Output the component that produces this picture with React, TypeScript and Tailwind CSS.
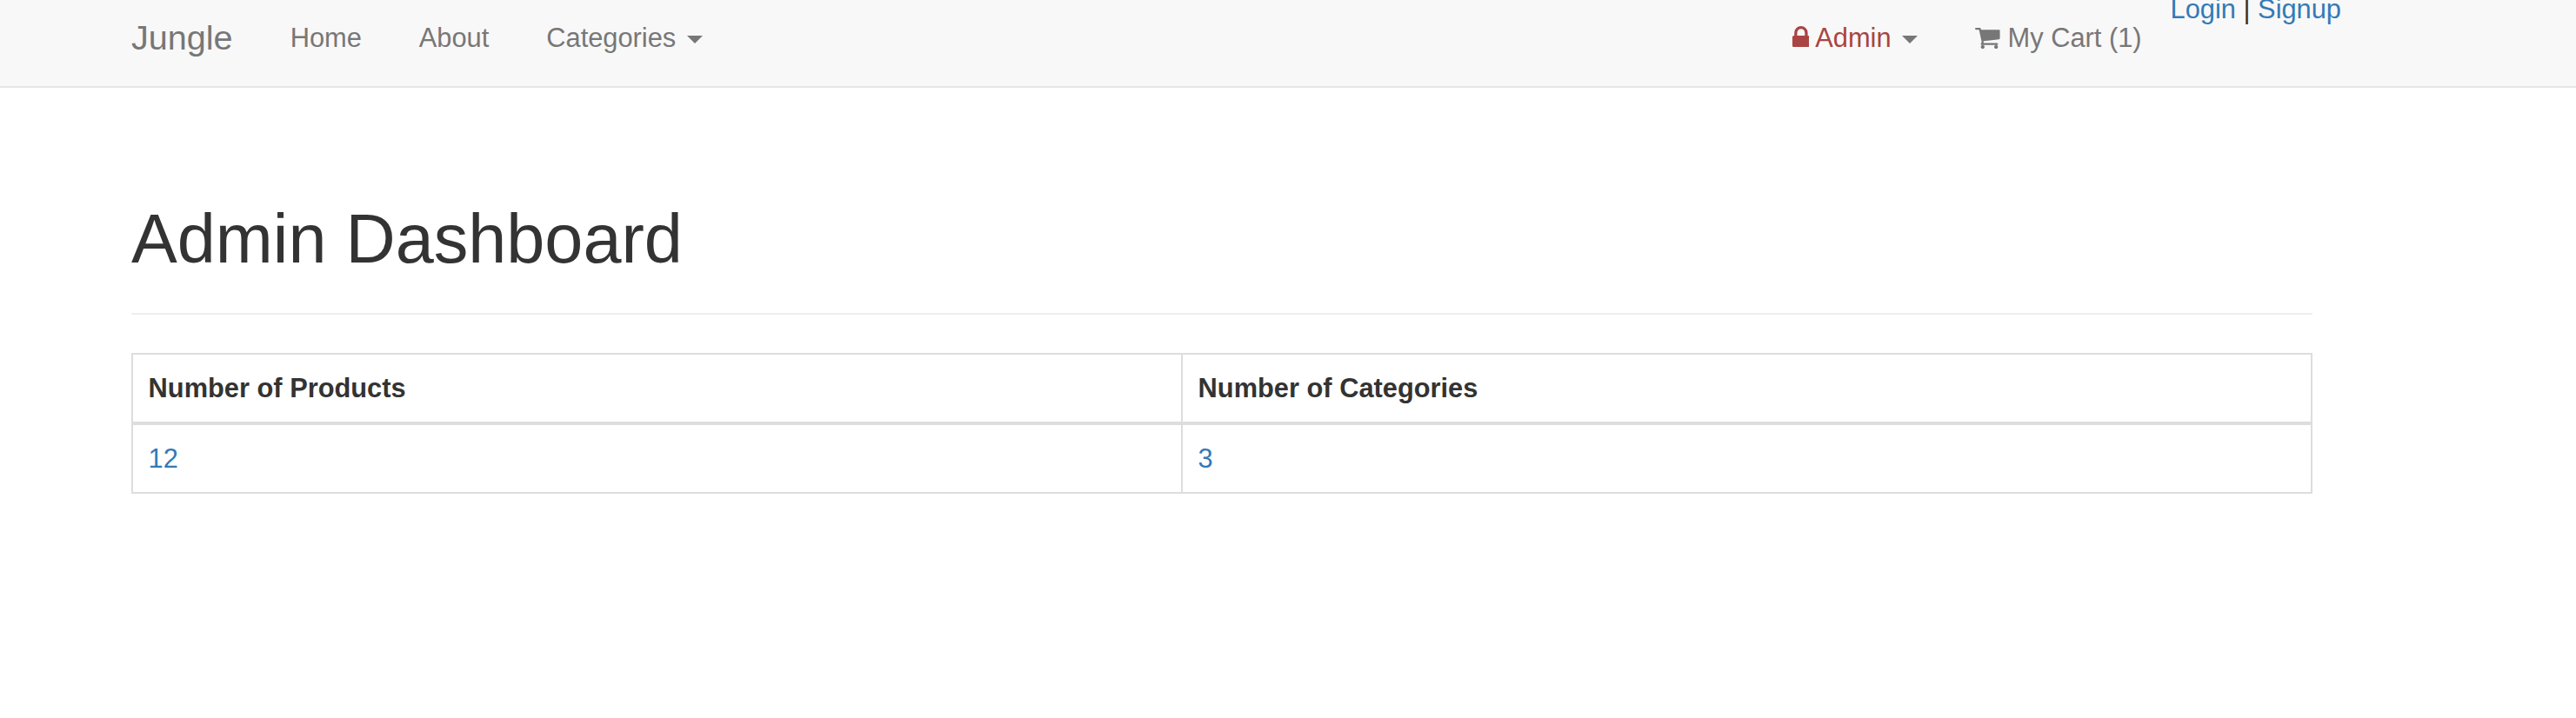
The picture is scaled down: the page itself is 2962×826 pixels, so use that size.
import type { ReactNode } from "react";

function LockIcon() {
  return (
    <svg viewBox="320 128 1152 1408" fill="currentColor" className="inline-block h-[24.2px] w-[19.8px] align-baseline" aria-hidden="true">
      <path d="M640 768h512v-192q0-106-75-181t-181-75-181 75-75 181v192zm832 96v576q0 40-28 68t-68 28h-960q-40 0-68-28t-28-68v-576q0-40 28-68t68-28h32v-192q0-184 132-316t316-132 316 132 132 316v192h32q40 0 68 28t28 68z" />
    </svg>
  );
}

function CartIcon() {
  return (
    <svg viewBox="64 256 1664 1408" fill="currentColor" className="inline-block h-[24.2px] w-[28.6px] align-[-2.2px]" aria-hidden="true">
      <path d="M704 1536q0 52-38 90t-90 38-90-38-38-90 38-90 90-38 90 38 38 90zm896 0q0 52-38 90t-90 38-90-38-38-90 38-90 90-38 90 38 38 90zm128-1088v512q0 24-16.500 42.500t-40.500 21.500l-1044 122q13 60 13 70 0 16-24 64h920q26 0 45 19t19 45-19 45-45 19h-1024q-26 0-45-19t-19-45q0-11 8-31.500t16-36 21.500-40 15.500-29.500l-177-823h-204q-26 0-45-19t-19-45 19-45 45-19h256q16 0 29.500 6.500t21.500 15.500 13.500 24.500 8 26 5.500 29.500 4.500 26h1201q26 0 45 19t19 45z" />
    </svg>
  );
}

function Caret() {
  return (
    <span className="ml-[4.4px] inline-block h-0 w-0 border-x-9 border-t-9 border-x-transparent border-t-[#777] align-middle" />
  );
}

function NavLink({ children, className = "text-[#777]" }: { children: ReactNode; className?: string }) {
  return (
    <a href="#" className={`block px-[33px] py-[33px] whitespace-nowrap ${className}`}>
      {children}
    </a>
  );
}

export default function App() {
  return (
    <div className="h-[826px] w-[2962px] overflow-hidden bg-white font-['Liberation_Sans',sans-serif] text-[30.8px] leading-[44px] text-[#333]">
      <header className="h-[101px] overflow-hidden border-b-2 border-[#e7e7e7] bg-[#f8f8f8]">
        <div className="-mt-[11.2px] ml-[118px] flex w-[2574px] items-start justify-between">
          <nav className="flex">
            <a href="#" className="block px-[33px] pt-[32.6px] text-[39.6px] leading-[44px] text-[#777]">Jungle</a>
            <NavLink>Home</NavLink>
            <NavLink>About</NavLink>
            <NavLink>Categories <Caret /></NavLink>
          </nav>
          <div className="flex">
            <NavLink className="text-[#a94442]"><LockIcon /> Admin <Caret /></NavLink>
            <NavLink><CartIcon /> My Cart (1)</NavLink>
            <div className="whitespace-nowrap">
              <a href="#" className="text-[#337ab7]">Login</a> | <a href="#" className="text-[#337ab7]">Signup</a>
            </div>
          </div>
        </div>
      </header>

      <main className="ml-[151px] w-[2508px] pt-[130px]">
        <div className="h-[131px] border-b-2 border-[#eee]">
          <h1 className="text-[79.2px] leading-[87px] font-normal">Admin Dashboard</h1>
        </div>
        <table className="mt-[44px] w-full table-fixed border-separate border-spacing-0 border-2 border-[#ddd] text-left">
          <thead>
            <tr className="h-[81px]">
              <th className="w-[1207px] border-r-2 border-b-4 border-[#ddd] px-[17.6px] py-0 font-bold">Number of Products</th>
              <th className="border-b-4 border-[#ddd] px-[17.6px] py-0 font-bold">Number of Categories</th>
            </tr>
          </thead>
          <tbody>
            <tr className="h-[77px]">
              <td className="border-r-2 border-[#ddd] px-[17.6px] py-0"><a href="#" className="text-[#337ab7]">12</a></td>
              <td className="px-[17.6px] py-0"><a href="#" className="text-[#337ab7]">3</a></td>
            </tr>
          </tbody>
        </table>
      </main>
    </div>
  );
}
